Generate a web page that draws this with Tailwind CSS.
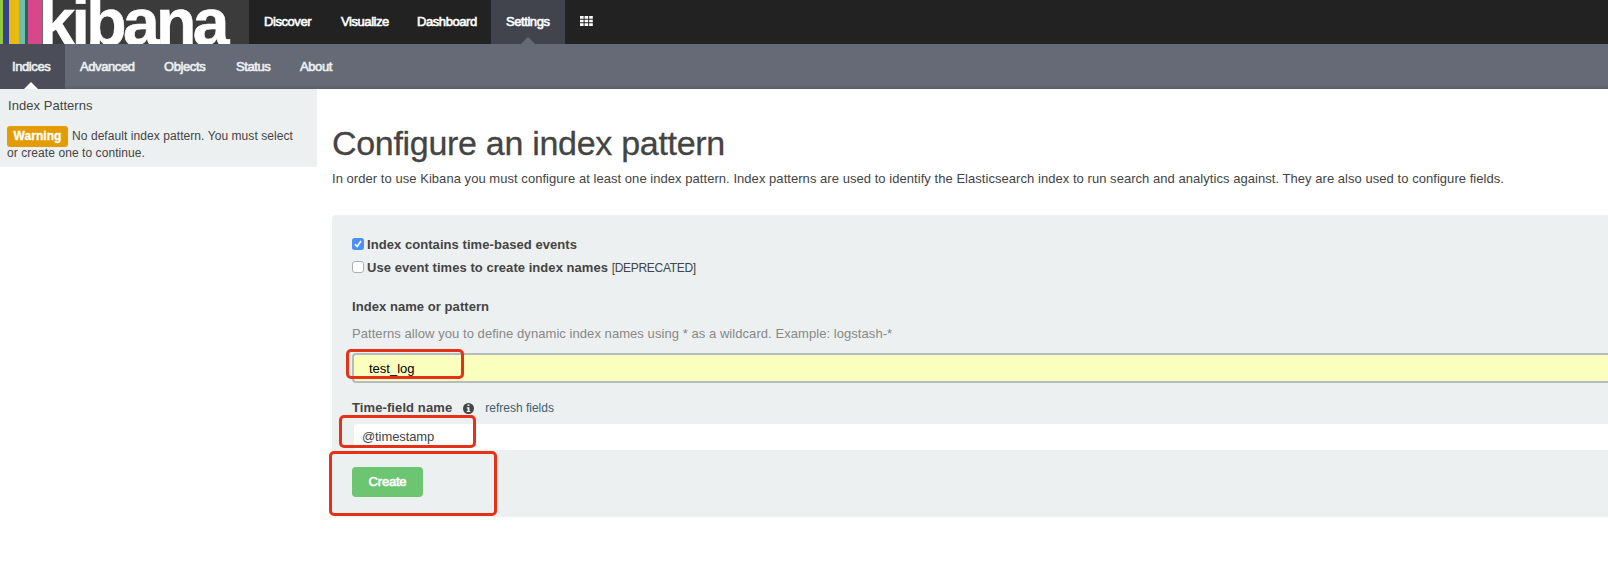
<!DOCTYPE html>
<html lang="en">
<head>
<meta charset="utf-8">
<title>Kibana</title>
<script src="https://cdn.jsdelivr.net/npm/@tailwindcss/browser@4"></script>
</head>
<body class="w-[1608px] h-[572px] overflow-hidden bg-white text-[#444] text-[13px] leading-[18px] font-['Liberation_Sans',sans-serif]">
<header class="flex h-[44px] bg-[#222] text-white">
  <svg class="w-[249px] h-[44px] bg-[#3b3b3b] shrink-0" viewBox="0 0 249 44">
    <rect width="3" height="44" fill="#94c83d"/>
    <rect x="3" width="6" height="44" fill="#34428f"/>
    <rect x="9" width="10" height="44" fill="#e8bb13"/>
    <rect x="19" width="6" height="44" fill="#6dbdb1"/>
    <rect x="25" width="3" height="44" fill="#2f6457"/>
    <rect x="28" width="14" height="44" fill="#d6478b"/>
    <text x="38.5" y="45" font-size="66" font-weight="700" fill="#fff" stroke="#fff" stroke-width=".6" textLength="191" lengthAdjust="spacing">kibana</text>
  </svg>
  <nav class="flex leading-[43px] tracking-[-0.43px] [-webkit-text-stroke:0.6px_#fff]">
    <a class="w-[76px] pl-[15px]">Discover</a>
    <a class="w-[77px] pl-[16px]">Visualize</a>
    <a class="w-[89px] pl-[15px]">Dashboard</a>
    <a class="w-[74px] pl-[15px] bg-[#42444d] relative">Settings<span class="absolute left-[30px] bottom-0 border-x-[7px] border-b-[7px] border-x-transparent border-b-[#656a76]"></span></a>
    <a class="pl-[15px] pt-[16px]">
      <svg class="w-[13px] h-[11px]" viewBox="0 0 13 11" fill="#fff"><path d="M0 0h3.6v2.8H0zM4.6 0h3.6v2.8H4.600zM9.200 0h3.600v2.800H9.200zM0 3.700h3.600v2.600H0zM4.600 3.700h3.600v2.600H4.600zM9.200 3.700h3.600v2.600H9.200zM0 7.200h3.600v2.800H0zM4.600 7.200h3.600v2.800H4.600zM9.200 7.200h3.600v2.800H9.200z"/></svg>
    </a>
  </nav>
</header>
<nav class="flex h-[45px] leading-[45px] bg-[#656a76] text-[#ecf0f1] tracking-[-0.4px] [-webkit-text-stroke:0.6px_#ecf0f1] shadow-[inset_0_-4px_4px_-4px_rgba(0,0,0,0.25)]">
  <a class="w-[65px] pl-[12px] bg-[#4b4d58] relative">Indices<span class="absolute left-[24px] bottom-0 border-x-[7px] border-b-[7px] border-x-transparent border-b-white"></span></a>
  <a class="w-[84px] pl-[15px]">Advanced</a>
  <a class="w-[72px] pl-[15px]">Objects</a>
  <a class="w-[64px] pl-[15px]">Status</a>
  <a class="pl-[15px]">About</a>
</nav>
<div class="flex">
  <aside class="w-[317px] h-[78px] shrink-0 bg-[#ecf0f1] pt-[8px] pl-[7px]">
    <h2 class="pl-[1px] leading-[17px] tracking-[0.05px]">Index Patterns</h2>
    <div class="text-[12px] leading-[17px] mt-[12px] whitespace-nowrap tracking-[0.07px]">
      <p class="flex h-[19px]"><span class="w-[61px] h-[21px] mr-[4px] leading-[20px] rounded-[3px] bg-[#e49c05] text-white font-bold text-center [-webkit-text-stroke:0.3px_#fff]">Warning</span><span class="leading-[20px]">No default index pattern. You must select</span></p>
      <p class="leading-[16px]">or create one to continue.</p>
    </div>
  </aside>
  <main class="pl-[15px] flex-1 min-w-0">
    <h1 class="text-[34px] leading-[40px] mt-[34px] whitespace-nowrap tracking-[-0.3px] [-webkit-text-stroke:0.3px_#444]">Configure an index pattern</h1>
    <p class="mt-[7px] whitespace-nowrap tracking-[0.046px]">In order to use Kibana you must configure at least one index pattern. Index patterns are used to identify the Elasticsearch index to run search and analytics against. They are also used to configure fields.</p>
    <form class="mt-[27px] h-[302px] rounded-l-[4px] bg-[#ecf0f1] pl-[20px] pt-[20px] relative">
      <label class="flex items-center h-[18px] font-bold tracking-[0.06px]"><svg class="w-[12px] h-[12px] mr-[3px]" viewBox="0 0 12 12"><rect width="12" height="12" rx="2.5" fill="#4d8ff7"/><path d="M3 6.300l2.200 2.300L9 3" fill="none" stroke="#fff" stroke-width="1.6"/></svg><span class="pt-[2px]">Index contains time-based events</span></label>
      <label class="flex items-center h-[18px] mt-[5px] font-bold whitespace-pre tracking-[0.05px]"><span class="w-[12px] h-[12px] mr-[3px] rounded-[3px] border border-[#b0b0b0] bg-white"></span><span class="pt-[2px]">Use event times to create index names <span class="font-normal text-[12px] tracking-[-0.3px]">[DEPRECATED]</span></span></label>
      <div class="font-bold mt-[22px] tracking-[0.06px]">Index name or pattern</div>
      <div class="text-[#888] mt-[9px] tracking-[0.06px]">Patterns allow you to define dynamic index names using * as a wildcard. Example: logstash-*</div>
      <div class="mt-[10px] h-[30px] border-2 border-r-0 border-[#b4bcc2] rounded-l-[4px] bg-[#faffbd] text-black pl-[15px] leading-[27px]">test_log</div>
      <div class="flex items-center mt-[16px] h-[18px]"><b class="tracking-[0.1px]">Time-field name</b><svg class="w-[11px] h-[11px] ml-[11px]" viewBox="0 0 11 11"><circle cx="5.5" cy="5.5" r="5.5" fill="#444"/><path d="M4.500 1.500h2v1.600h-2zM3.700 4.300h2.800v3.600h.9v1.200H3.700V7.900h.9V5.500h-.9z" fill="#ecf0f1"/></svg><a class="text-[12px] text-[#3d5f70] ml-[11px]">refresh fields</a></div>
      <div class="mt-[7px] ml-[2px] h-[26px] bg-white rounded-l-[3px] pl-[8px] leading-[25px] tracking-[-0.1px]">@timestamp</div>
      <button type="button" class="mt-[17px] block w-[71px] h-[30px] rounded-[4px] bg-[#6bc571] text-white text-center leading-[28px] tracking-[-0.2px] [-webkit-text-stroke:0.6px_#fff]">Create</button>
      <span class="absolute left-[14px] top-[134px] w-[118px] h-[30px] border-3 border-[#e63117] rounded-[5px]"></span>
      <span class="absolute left-[7px] top-[200px] w-[137px] h-[33px] border-3 border-[#e63117] rounded-[5px]"></span>
      <span class="absolute left-[-3px] top-[236px] w-[168px] h-[65px] border-3 border-[#e63117] rounded-[5px]"></span>
    </form>
  </main>
</div>
</body>
</html>
